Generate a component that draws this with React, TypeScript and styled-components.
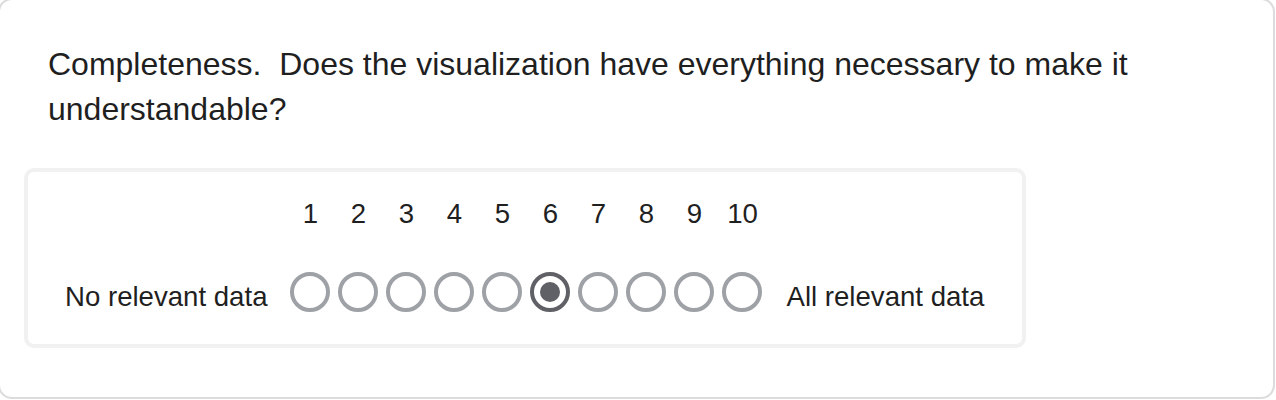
import * as React from 'react';
import styled, { createGlobalStyle } from 'styled-components';

const GlobalStyle = createGlobalStyle`
  body {
    margin: 0;
    background: #ffffff;
    font-family: 'Liberation Sans', Arial, Helvetica, sans-serif;
    color: #222222;
    overflow: hidden;
  }
`;

const Card = styled.div`
  box-sizing: border-box;
  width: 1277px;
  height: 401px;
  margin: -2px 0 0 -2px;
  padding: 42px 24px 0 24px;
  border: 2px solid #dcdcdc;
  border-radius: 14px;
  background: #ffffff;
`;

const Question = styled.p`
  margin: 0 0 36px 0;
  padding-left: 24px;
  font-size: 32px;
  line-height: 44.8px;
  color: #1f1f1f;
`;

const ScaleBox = styled.div`
  box-sizing: border-box;
  width: 1002px;
  height: 180px;
  border: 4px solid #f1f1f1;
  border-radius: 10px;
  padding: 22px 0 0 17px;
`;

const ScaleGrid = styled.div`
  display: grid;
  grid-template-columns: auto repeat(10, 48px) auto;
  grid-template-rows: 40px 40px;
  row-gap: 38px;
  align-items: center;
  justify-content: start;
  font-size: 27.6px;
  color: #1f1f1f;
`;

const Number = styled.div`
  text-align: center;
  line-height: 40px;
`;

const EndLabel = styled.div`
  padding: 0 19px 0 20px;
  margin-top: 10px;
  white-space: nowrap;
`;

const Cell = styled.div`
  display: flex;
  justify-content: center;
  align-items: center;
`;

const Radio = styled.input.attrs({ type: 'radio' })`
  appearance: none;
  box-sizing: border-box;
  width: 40px;
  height: 40px;
  margin: 0;
  border: 4px solid #9ea2a6;
  border-radius: 50%;
  background: #ffffff;
  display: grid;
  place-items: center;

  &::after {
    content: '';
    width: 20px;
    height: 20px;
    border-radius: 50%;
    background: transparent;
  }

  &:checked {
    border-color: #5f6166;
  }

  &:checked::after {
    background: #5f6166;
  }
`;

const values = [1, 2, 3, 4, 5, 6, 7, 8, 9, 10];

const App = () => (
  <>
    <GlobalStyle />
    <Card>
      <Question>
        Completeness.{'\u00a0'} Does the visualization have everything necessary to make it
        understandable?
      </Question>
      <ScaleBox>
        <ScaleGrid>
          <div />
          {values.map((v) => (
            <Number key={v}>{v}</Number>
          ))}
          <div />
          <EndLabel>No relevant data</EndLabel>
          {values.map((v) => (
            <Cell key={v}>
              <Radio name="completeness" value={v} defaultChecked={v === 6} aria-label={String(v)} />
            </Cell>
          ))}
          <EndLabel>All relevant data</EndLabel>
        </ScaleGrid>
      </ScaleBox>
    </Card>
  </>
);

export default App;
